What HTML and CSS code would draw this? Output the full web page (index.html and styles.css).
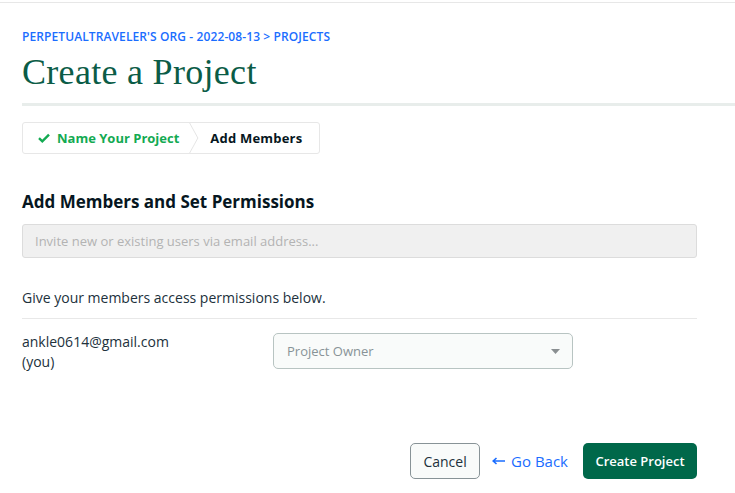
FILE: index.html
```html
<!DOCTYPE html>
<html>
<head>
<meta charset="utf-8">
<link rel="stylesheet" href="styles.css">
</head>
<body>
<div class="topbar"></div>
<main class="page">
  <nav class="crumbs">PERPETUALTRAVELER'S ORG - 2022-08-13 &gt; PROJECTS</nav>
  <h1 class="title">Create a Project</h1>
  <div class="rule"></div>
  <div class="steps">
    <div class="step done">
      <svg class="check" width="12" height="10" viewBox="0 0 12 10"><path d="M1 5.2 L4.3 8.3 L11 1.6" fill="none" stroke="#13aa52" stroke-width="2.4"/></svg>
      Name Your Project
    </div>
    <svg class="chev" width="10" height="31" viewBox="0 0 10 31"><path d="M0.5 0 L9 15.5 L0.5 31" fill="none" stroke="#e4e4e4" stroke-width="1"/></svg>
    <div class="step current">Add Members</div>
  </div>
  <h2 class="section">Add Members and Set Permissions</h2>
  <input class="invite" type="text" placeholder="Invite new or existing users via email address...">
  <p class="hint">Give your members access permissions below.</p>
  <div class="member">
    <div class="who">ankle0614@gmail.com<br>(you)</div>
    <div class="select">
      <span>Project Owner</span>
      <svg width="9" height="5" viewBox="0 0 9 5"><path d="M0 0 H9 L4.5 5 Z" fill="#8a8f91"/></svg>
    </div>
  </div>
  <div class="actions">
    <button class="btn cancel">Cancel</button>
    <a class="back"><svg width="13" height="8" viewBox="0 0 13 8"><path d="M13 4 H2 M4.5 1 L1.2 4 L4.5 7" fill="none" stroke="#1a6dff" stroke-width="1.6"/></svg>Go Back</a>
    <button class="btn primary">Create Project</button>
  </div>
</main>
</body>
</html>
```
FILE: styles.css
```css
* { box-sizing: border-box; }
html, body { margin: 0; background: #fff; }
body { font-family: "Open Sans", "Lato", sans-serif; color: #21313c; }
.topbar { height: 3px; border-bottom: 1px solid #e7e7e7; }
.page { padding: 0 0 0 22px; }
.crumbs {
  margin-top: 27px;
  font-size: 12px; font-weight: 600; color: #1a6dff; letter-spacing: 0.1px;
  line-height: 14px;
}
.title {
  margin: 8px 0 0; font-family: "Liberation Serif", serif; font-weight: 400;
  font-size: 36px; line-height: 40px; color: #0b5c47; letter-spacing: 0.3px;
}
.rule { margin-top: 11px; height: 3px; background: #e8edeb; }
.steps {
  margin-top: 16px; display: inline-flex; align-items: stretch; height: 32px;
  border: 1px solid #e7e7e7; border-radius: 3px; width: 298px;
}
.step { display: flex; align-items: center; font-size: 13px; font-weight: 700; }
.step.done { color: #13aa52; padding-left: 15px; padding-right: 10px; gap: 7px; }
.step.current { color: #061621; padding-left: 11px; letter-spacing: 0.2px; }
.chev { display: block; height: 30px; }
.section { margin: 37px 0 0; font-size: 17px; font-weight: 700; color: #061621; line-height: 22px; }
.invite {
  display: block; margin-top: 11px; width: 675px; height: 34px;
  background: #f0f0f0; border: 1px solid #dcdcdc; border-radius: 3px;
  padding: 0 12px; font: 13px "Open Sans", sans-serif; color: #333;
}
.invite::placeholder { color: #b3b3b3; }
.hint { margin: 31px 0 0; font-size: 14px; line-height: 17px; width: 675px; padding-bottom: 12px; border-bottom: 1px solid #e8e8e8; }
.member { display: flex; align-items: flex-start; margin-top: 14px; }
.who { width: 251px; font-size: 14px; line-height: 20px; margin-top: -1px; }
.select {
  width: 300px; height: 36px; border: 1px solid #b8c4c2; border-radius: 5px;
  background: #f9fbfa; display: flex; align-items: center; justify-content: space-between;
  padding: 0 12px 0 13px; font-size: 13px; color: #889397;
}
.actions { display: flex; align-items: center; justify-content: flex-end; width: 675px; margin-top: 71px; }
.btn { font: 13px "Open Sans", sans-serif; height: 36px; border-radius: 5px; cursor: pointer; }
.cancel { width: 70px; border: 1px solid #889397; background: #f9fbfa; color: #21313c; font-size: 14px; }
.back { color: #1a6dff; font-size: 15px; margin: 0 15px 0 12px; display: flex; align-items: center; gap: 6px; }
.primary { width: 114px; border: none; background: #00684a; color: #fff; font-weight: 600; }
```
